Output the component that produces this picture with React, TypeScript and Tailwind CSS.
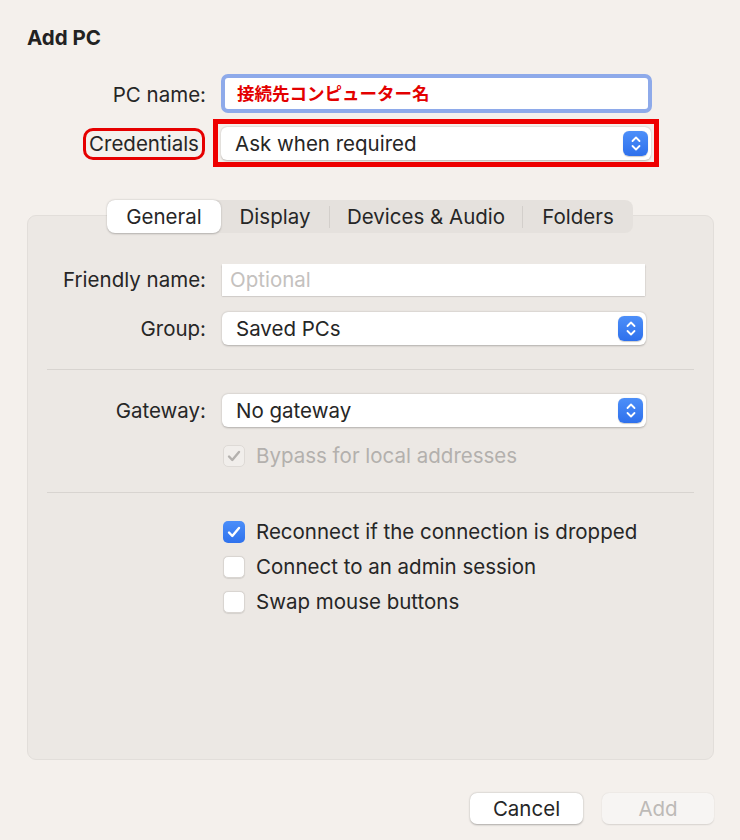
import React from "react";

const font = { fontFamily: 'Inter, "Noto Sans CJK JP", sans-serif' };

function Stepper() {
  return (
    <div className="w-[25px] h-[25px] rounded-[6px] bg-gradient-to-b from-[#4d8ff9] to-[#2e70ec] flex items-center justify-center shadow-[0_0.5px_1px_rgba(0,0,0,0.2)]">
      <svg width="12" height="17" viewBox="0 0 12 17" fill="none" stroke="white" strokeWidth="1.8" strokeLinecap="round" strokeLinejoin="round">
        <path d="M2.5 6 L6 2.5 L9.5 6" />
        <path d="M2.5 11 L6 14.5 L9.5 11" />
      </svg>
    </div>
  );
}

function Popup({ text, className = "" }: { text: string; className?: string }) {
  return (
    <div className={"h-[33px] bg-white rounded-[6px] flex items-center justify-between pl-[14px] pr-[3px] shadow-[0_0.5px_2px_rgba(0,0,0,0.25)] " + className}>
      <span className="text-[20.5px] text-[#262626]">{text}</span>
      <Stepper />
    </div>
  );
}

function Check({ checked, disabled }: { checked?: boolean; disabled?: boolean }) {
  if (checked && !disabled) {
    return (
      <div className="w-[22px] h-[22px] rounded-[5px] bg-gradient-to-b from-[#4b8ef9] to-[#2f72ed] flex items-center justify-center shrink-0">
        <svg width="14" height="12" viewBox="0 0 14 12" fill="none" stroke="white" strokeWidth="2.4" strokeLinecap="round" strokeLinejoin="round">
          <path d="M2 6.5 L5.3 10 L12 2" />
        </svg>
      </div>
    );
  }
  if (checked && disabled) {
    return (
      <div className="w-[22px] h-[22px] rounded-[5px] bg-[#f1eeeb] border border-[#dedad6] flex items-center justify-center shrink-0">
        <svg width="14" height="12" viewBox="0 0 14 12" fill="none" stroke="#b4b1ae" strokeWidth="2.4" strokeLinecap="round" strokeLinejoin="round">
          <path d="M2 6.5 L5.3 10 L12 2" />
        </svg>
      </div>
    );
  }
  return <div className="w-[22px] h-[22px] rounded-[5px] bg-white border border-[#d9d5d1] shadow-[0_0.5px_1px_rgba(0,0,0,0.1)] shrink-0" />;
}

export default function App() {
  return (
    <div style={font} className="w-[740px] h-[840px] bg-[#f4f0ec] text-[#262626] text-[20.5px] leading-[24px] flex flex-col overflow-hidden">
      <div className="pl-[27px] pt-[26px] h-[24px] box-content text-[20.5px] font-bold leading-[24px] text-[#222]">Add PC</div>

      {/* PC name */}
      <div className="flex items-center mt-[24px]">
        <div className="w-[206px] text-right pt-[2px]">PC name:</div>
        <div className="ml-[15px] w-[431px] h-[39px] rounded-[7px] border-[4px] border-[#8eaaea] bg-white flex items-center pl-[12px]">
          <span className="text-[17.5px] font-bold text-[#e30000]">接続先コンピューター名</span>
        </div>
      </div>

      {/* Credentials */}
      <div className="flex items-center mt-[6px]">
        <div className="w-[206px] flex justify-end">
          <div className="w-[122px] h-[32px] mr-[1px] mt-[2px] rounded-[10px] border-[3px] border-[#e60000] flex items-center justify-center">Credentials</div>
        </div>
        <div className="ml-[7px] w-[446px] h-[48px] border-[5px] border-[#ee0000] px-[3px] pt-[3px]">
          <Popup text="Ask when required" />
        </div>
      </div>

      {/* Tabs */}
      <div className="flex justify-center mt-[33px] relative z-10">
        <div className="h-[33px] w-[526px] rounded-[8px] bg-[#e5e1dd] flex items-center">
          <div className="w-[114px] h-[33px] bg-white rounded-[8px] shadow-[0_0.5px_2px_rgba(0,0,0,0.25)] flex items-center justify-center">General</div>
          <div className="w-[108px] flex items-center justify-center">Display</div>
          <div className="w-px h-[22px] bg-[#d3cfcb]" />
          <div className="w-[192px] flex items-center justify-center">Devices &amp; Audio</div>
          <div className="w-px h-[22px] bg-[#d3cfcb]" />
          <div className="w-[110px] flex items-center justify-center">Folders</div>
        </div>
      </div>

      {/* Panel */}
      <div className="ml-[27px] w-[687px] h-[545px] -mt-[18px] rounded-[9px] bg-[#ece8e4] border border-[#e2deda] flex flex-col">
        <div className="flex items-center mt-[48px]">
          <div className="w-[178px] text-right">Friendly name:</div>
          <div className="ml-[16px] w-[423px] h-[32px] bg-white shadow-[0_0.5px_1.5px_rgba(0,0,0,0.3)] flex items-center pl-[8px]">
            <span className="text-[#c4c1be]">Optional</span>
          </div>
        </div>
        <div className="flex items-center mt-[16px]">
          <div className="w-[178px] text-right">Group:</div>
          <Popup text="Saved PCs" className="ml-[16px] w-[424px]" />
        </div>
        <div className="mx-[19px] h-px bg-[#d8d4d0] mt-[24px]" />
        <div className="flex items-center mt-[24px]">
          <div className="w-[178px] text-right">Gateway:</div>
          <Popup text="No gateway" className="ml-[16px] w-[424px]" />
        </div>
        <div className="flex items-center mt-[17px] ml-[195px] gap-[11px] h-[24px]">
          <Check checked disabled />
          <span className="text-[#b3b0ad]">Bypass for local addresses</span>
        </div>
        <div className="mx-[19px] h-px bg-[#d8d4d0] mt-[24px]" />
        <div className="flex flex-col mt-[27px] ml-[195px] gap-[11px]">
          <div className="flex items-center gap-[11px] h-[24px]">
            <Check checked />
            <span>Reconnect if the connection is dropped</span>
          </div>
          <div className="flex items-center gap-[11px] h-[24px]">
            <Check />
            <span>Connect to an admin session</span>
          </div>
          <div className="flex items-center gap-[11px] h-[24px]">
            <Check />
            <span>Swap mouse buttons</span>
          </div>
        </div>
      </div>

      {/* Buttons */}
      <div className="flex justify-end mt-[33px] pr-[26px] gap-[19px]">
        <div className="w-[113px] h-[31px] bg-white rounded-[7px] shadow-[0_0.5px_2px_rgba(0,0,0,0.3)] flex items-center justify-center">Cancel</div>
        <div className="w-[112px] h-[31px] bg-[#f7f5f3] rounded-[7px] shadow-[0_0.5px_1.5px_rgba(0,0,0,0.12)] flex items-center justify-center text-[#bdbab7]">Add</div>
      </div>
    </div>
  );
}
